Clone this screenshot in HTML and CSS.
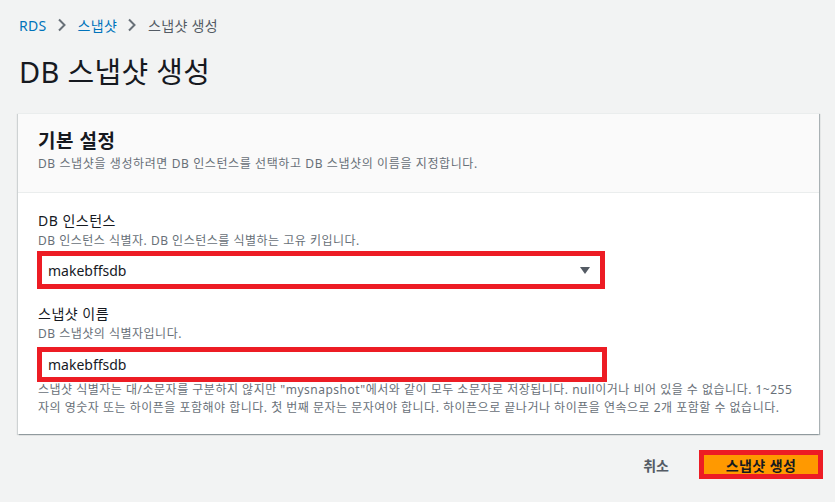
FILE: index.html
```html
<!DOCTYPE html>
<html lang="ko">
<head>
<meta charset="utf-8">
<link rel="stylesheet" href="styles.css">
</head>
<body>
<div class="page">
  <nav class="crumbs">
    <a class="crumb-link">RDS</a>
    <svg class="chev" width="10" height="14" viewBox="0 0 10 14"><path d="M2 1.5 L7.5 7 L2 12.5" fill="none" stroke="#687078" stroke-width="2"/></svg>
    <a class="crumb-link">스냅샷</a>
    <svg class="chev" width="10" height="14" viewBox="0 0 10 14"><path d="M2 1.5 L7.5 7 L2 12.5" fill="none" stroke="#687078" stroke-width="2"/></svg>
    <span class="crumb-cur">스냅샷 생성</span>
  </nav>
  <h1 class="title">DB 스냅샷 생성</h1>
  <section class="card">
    <div class="card-head">
      <h2 class="card-title">기본 설정</h2>
      <p class="card-desc">DB 스냅샷을 생성하려면 DB 인스턴스를 선택하고 DB 스냅샷의 이름을 지정합니다.</p>
    </div>
    <div class="card-body">
      <div class="field">
        <div class="label">DB 인스턴스</div>
        <div class="desc">DB 인스턴스 식별자. DB 인스턴스를 식별하는 고유 키입니다.</div>
        <div class="select">
          <span>makebffsdb</span>
          <svg class="caret" width="12" height="10" viewBox="0 0 12 10"><path d="M1 1 H11 L6 8 Z" fill="#545b64"/></svg>
        </div>
      </div>
      <div class="field field2">
        <div class="label">스냅샷 이름</div>
        <div class="desc">DB 스냅샷의 식별자입니다.</div>
        <div class="input">makebffsdb</div>
        <p class="help">스냅샷 식별자는 대/소문자를 구분하지 않지만 "mysnapshot"에서와 같이 모두 소문자로 저장됩니다. null이거나 비어 있을 수 없습니다. 1~255자의 영숫자 또는 하이픈을 포함해야 합니다. 첫 번째 문자는 문자여야 합니다. 하이픈으로 끝나거나 하이픈을 연속으로 2개 포함할 수 없습니다.</p>
      </div>
    </div>
  </section>
  <div class="actions">
    <button class="btn-cancel">취소</button>
    <button class="btn-primary">스냅샷 생성</button>
  </div>
</div>
</body>
</html>
```
FILE: styles.css
```css
* { box-sizing: border-box; }
html, body { margin: 0; padding: 0; }
body {
  background: #f2f3f3;
  font-family: "Noto Sans", "Noto Sans CJK KR", sans-serif;
  color: #16191f;
  width: 835px;
  height: 502px;
  overflow: hidden;
}
.page { padding: 14px 16px 0 18px; }
.crumbs {
  display: flex;
  align-items: center;
  gap: 9px;
  font-size: 14px;
  letter-spacing: 0.3px;
  height: 22px;
  padding-left: 1px;
}
.crumb-link { color: #0073bb; }
.crumb-cur { color: #545b64; }
.chev { display: block; margin: 0 2px 0 1px; }
.title {
  margin: 0;
  font-weight: 400;
  font-size: 29px;
  letter-spacing: 0.3px;
  line-height: 38px;
  margin-top: 17px;
  padding-left: 1px;
}
.card {
  margin-top: 22px;
  background: #fff;
  border-top: 1px solid #eaeded;
  box-shadow: 1px 1px 1px 0 rgba(0, 28, 36, 0.3), -1px 1px 1px 0 rgba(0, 28, 36, 0.15);
  width: 801px;
}
.card-head {
  background: #fafafa;
  border-bottom: 1px solid #eaeded;
  padding: 14px 20px 19px;
}
.card-title {
  margin: 0;
  font-size: 19px;
  letter-spacing: 0.5px;
  font-weight: 700;
  line-height: 26px;
}
.card-desc {
  margin: 1px 0 0;
  font-size: 12px;
  letter-spacing: 0.6px;
  color: #687078;
  line-height: 18px;
}
.card-body { padding: 18px 20px 17px 19px; }
.label { font-size: 14px; letter-spacing: 0.5px; line-height: 20px; padding-left: 1px; }
.desc { font-size: 12px; letter-spacing: 0.5px; color: #687078; line-height: 16px; padding-left: 1px; margin-top: 2px; }
.select {
  margin-top: 2px;
  width: 568px;
  height: 38px;
  border: 5px solid #ed1c24;
  display: flex;
  align-items: center;
  justify-content: space-between;
  padding: 0 9px 0 6px;
  font-size: 14px;
}
.caret { display: block; margin-top: 2px; }
.field2 { margin-top: 15px; }
.input {
  margin-top: 5px;
  width: 570px;
  height: 35px;
  border: 5px solid #ed1c24;
  display: flex;
  align-items: center;
  padding: 0 6px;
  font-size: 14px;
}
.help {
  margin: -1px 0 0;
  font-size: 12px;
  letter-spacing: 0.5px;
  color: #687078;
  line-height: 18px;
  padding-left: 1px;
  padding-right: 0;
}
.actions {
  display: flex;
  justify-content: flex-end;
  align-items: center;
  gap: 30px;
  margin-top: 16px;
  margin-right: -4px;
}
.btn-cancel {
  background: none;
  border: none;
  font-family: inherit;
  font-size: 14px;
  font-weight: 700;
  color: #545b64;
  padding: 0;
}
.btn-primary {
  font-family: inherit;
  font-size: 14px;
  letter-spacing: 0.4px;
  font-weight: 700;
  color: #16191f;
  background: #ff9900;
  border: 5px solid #ed1c24;
  width: 124px;
  height: 29px;
  padding: 0;
}
```
